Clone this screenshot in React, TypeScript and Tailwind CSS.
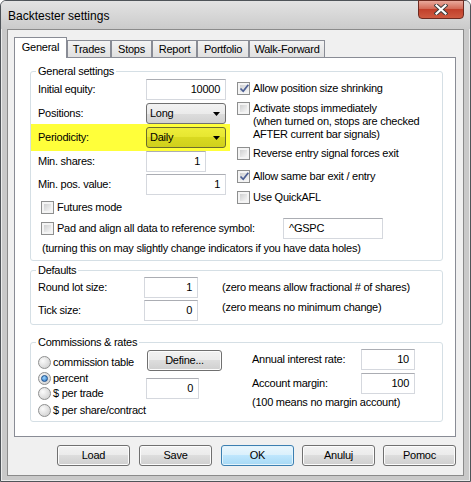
import React from 'react';

const Check = ({ on = false }: { on?: boolean }) => (
  <span className="w-[13px] h-[13px] shrink-0 border border-[#8e8f8f] bg-[#f4f4f4] p-[2px] flex">
    <span className="flex-1 bg-[linear-gradient(135deg,#cfd0d1,#f6f6f6)] flex items-center justify-center">
      {on && (
        <svg width="9" height="9" viewBox="0 0 9 9" className="overflow-visible">
          <path d="M0.5 4.5 L3.2 7.3 L8.3 0.8" fill="none" stroke="#4b5e93" strokeWidth="1.7" />
        </svg>
      )}
    </span>
  </span>
);

const Radio = ({ on = false }: { on?: boolean }) => (
  <span className="w-[13px] h-[13px] shrink-0 rounded-full border border-[#8e8f8f] bg-[radial-gradient(circle_at_35%_35%,#fbfbfb,#c9c9c9)] flex items-center justify-center">
    {on && <span className="w-[7px] h-[7px] rounded-full border border-[#1c4f8a] bg-[radial-gradient(circle_at_40%_35%,#9bd6ff,#2a6fc0)]" />}
  </span>
);

const Field = ({ v, className = '' }: { v: string; className?: string }) => (
  <div className={`h-[21px] shrink-0 border border-[#d5d8de] border-t-[#abadb3] bg-white flex items-center ${className}`}>
    {v}
  </div>
);

const Combo = ({ v, yellow = false }: { v: string; yellow?: boolean }) => (
  <div
    className={`w-[80px] h-[21px] shrink-0 rounded-[3px] border flex items-center justify-between pl-[3px] pr-[5px] ${
      yellow
        ? 'border-[#6b6b2e] bg-[linear-gradient(#eeee3a,#e6e630_50%,#d9d920_50%,#d0d01c)]'
        : 'border-[#707070] bg-[linear-gradient(#f2f2f2,#ebebeb_50%,#dddddd_50%,#d1d1d1)]'
    }`}
  >
    <span>{v}</span>
    <svg width="7" height="4" viewBox="0 0 7 4">
      <path d="M0 0 H7 L3.5 4 Z" fill="#000" />
    </svg>
  </div>
);

const Btn = ({ label, primary = false, className = '' }: { label: string; primary?: boolean; className?: string }) => (
  <div
    className={`h-[21px] shrink-0 rounded-[3px] border flex items-center justify-center ${
      primary
        ? 'border-[#3c7fb1] bg-[linear-gradient(#eaf6fd,#d9f0fc_50%,#bee6fd_50%,#a7d9f5)] shadow-[inset_0_0_0_1px_#e3f4fc]'
        : 'border-[#707070] bg-[linear-gradient(#f2f2f2,#ebebeb_50%,#dddddd_50%,#cfcfcf)] shadow-[inset_0_0_0_1px_#fcfcfc]'
    } ${className}`}
  >
    {label}
  </div>
);

const Group = ({ title, className, children }: { title: string; className: string; children: React.ReactNode }) => (
  <div className={`relative ml-[15px] w-[413px] rounded-[3px] border border-[#d5dfe5] ${className}`}>
    <span className="absolute -top-[7px] left-[5px] bg-white px-[2px] leading-[13px]">{title}</span>
    {children}
  </div>
);

const tabs = [
  { name: 'Trades', w: 'w-[44px]' },
  { name: 'Stops', w: 'w-[41px]' },
  { name: 'Report', w: 'w-[45px]' },
  { name: 'Portfolio', w: 'w-[52px]' },
  { name: 'Walk-Forward', w: 'w-[76px]' },
];

export default function App() {
  return (
    <div className="w-[471px] h-[482px] whitespace-nowrap font-['Liberation_Sans',Arial,sans-serif] text-[11px] leading-[13px] tracking-[-0.25px] text-black">
      <div className="w-full h-full rounded-t-[6px] border border-[#4f5459] bg-[#c9c9c9] shadow-[inset_0_0_0_1px_#ebebeb] flex flex-col">
        {/* title bar */}
        <div className="h-[28px] shrink-0 flex items-start justify-between rounded-t-[5px] bg-[linear-gradient(#e3e3e3,#cbcbcb)]">
          <span className="pl-[7px] pt-[8px] text-[12px] leading-[14px] tracking-normal">Backtester settings</span>
          <div className="mr-[6px] -mt-px w-[46px] h-[19px] rounded-b-[4px] border border-[#6d2a20] bg-[linear-gradient(#e9a99c,#d36b58_45%,#c2402b_50%,#cf5a40)] flex items-center justify-center">
            <svg width="14" height="11" viewBox="0 0 14 11">
              <path d="M2.5 1.5 L11.5 9.5 M11.5 1.5 L2.5 9.5" stroke="#3b3b3b" strokeWidth="4" strokeLinecap="square" />
              <path d="M2.5 1.5 L11.5 9.5 M11.5 1.5 L2.5 9.5" stroke="#ffffff" strokeWidth="2.2" strokeLinecap="square" />
            </svg>
          </div>
        </div>

        {/* client area */}
        <div className="mx-[6px] h-[447px] shrink-0 border border-[#8b8b8b] bg-[#f0f0f0] flex flex-col">
          {/* tabs */}
          <div className="mt-[7px] ml-[6px] h-[20px] flex items-end">
            <div className="relative z-10 -mb-px w-[53px] h-[21px] border border-b-0 border-[#898c95] bg-white flex items-start justify-center pt-[3px]">
              General
            </div>
            {tabs.map((t) => (
              <div
                key={t.name}
                className={`${t.w} h-[17px] border border-b-0 border-[#898c95] bg-[linear-gradient(#f3f3f3,#e0e0e0)] flex items-center justify-center`}
              >
                {t.name}
              </div>
            ))}
          </div>

          {/* panel */}
          <div className="ml-[6px] w-[442px] h-[380px] border border-[#898c95] bg-white flex flex-col">
            {/* General settings */}
            <Group title="General settings" className="mt-[13px] h-[190px]">
              <div className="h-[129px] flex">
                <div className="w-[199px] flex flex-col">
                  <div className="mt-[7px] pl-[7px] flex items-center">
                    <span className="w-[108px]">Initial equity:</span>
                    <Field v="10000" className="w-[80px] justify-end pr-[5px]" />
                  </div>
                  <div className="mt-[3px] pl-[7px] flex items-center">
                    <span className="w-[108px]">Positions:</span>
                    <Combo v="Long" />
                  </div>
                  <div className="h-[27px] pl-[7px] pt-[3px] bg-[#ffff3a] flex items-start">
                    <span className="w-[108px] pt-[4px]">Periodicity:</span>
                    <Combo v="Daily" yellow />
                  </div>
                  <div className="pl-[7px] flex items-center">
                    <span className="w-[108px]">Min. shares:</span>
                    <Field v="1" className="w-[60px] justify-end pr-[5px]" />
                  </div>
                  <div className="mt-[2px] pl-[7px] flex items-center">
                    <span className="w-[108px]">Min. pos. value:</span>
                    <Field v="1" className="w-[80px] justify-end pr-[5px]" />
                  </div>
                </div>
                <div className="ml-[7px] flex flex-col">
                  <div className="mt-[10px] flex items-start gap-[3px]">
                    <Check on />
                    <span>Allow position size shrinking</span>
                  </div>
                  <div className="mt-[7px] flex items-start gap-[3px]">
                    <Check />
                    <span>
                      Activate stops immediately
                      <br />
                      (when turned on, stops are checked
                      <br />
                      AFTER current bar signals)
                    </span>
                  </div>
                  <div className="mt-[6px] flex items-start gap-[3px]">
                    <Check />
                    <span>Reverse entry signal forces exit</span>
                  </div>
                  <div className="mt-[10px] flex items-start gap-[3px]">
                    <Check on />
                    <span>Allow same bar exit / entry</span>
                  </div>
                  <div className="mt-[8px] flex items-start gap-[3px]">
                    <Check />
                    <span>Use QuickAFL</span>
                  </div>
                </div>
              </div>
              <div className="pl-[10px] flex items-start gap-[3px]">
                <Check />
                <span>Futures mode</span>
              </div>
              <div className="mt-[4px] pl-[10px] flex items-center">
                <Check />
                <span className="ml-[3px] w-[226px]">Pad and align all data to reference symbol:</span>
                <Field v="^GSPC" className="w-[100px] pl-[5px]" />
              </div>
              <div className="mt-[3px] pl-[11px]">(turning this on may slightly change indicators if you have data holes)</div>
            </Group>

            {/* Defaults */}
            <Group title="Defaults" className="mt-[9px] h-[55px]">
              <div className="mt-[6px] pl-[7px] flex items-center">
                <span className="w-[106px]">Round lot size:</span>
                <Field v="1" className="w-[54px] justify-end pr-[5px]" />
                <span className="ml-[24px]">(zero means allow fractional # of shares)</span>
              </div>
              <div className="mt-[2px] pl-[7px] flex items-start">
                <span className="w-[106px] pt-[4px]">Tick size:</span>
                <Field v="0" className="w-[54px] justify-end pr-[5px]" />
                <span className="ml-[24px] pt-[1px]">(zero means no minimum change)</span>
              </div>
            </Group>

            {/* Commissions & rates */}
            <Group title="Commissions & rates" className="mt-[17px] h-[80px] flex">
              <div className="w-[115px] shrink-0 pl-[7px] flex flex-col">
                <div className="mt-[13px] flex items-start gap-[2px]">
                  <Radio />
                  <span>commission table</span>
                </div>
                <div className="mt-[3px] flex items-start gap-[2px]">
                  <Radio on />
                  <span>percent</span>
                </div>
                <div className="mt-[2px] flex items-start gap-[2px]">
                  <Radio />
                  <span>$ per trade</span>
                </div>
                <div className="mt-[4px] flex items-start gap-[2px]">
                  <Radio />
                  <span>$ per share/contract</span>
                </div>
              </div>
              <div className="flex flex-col">
                <Btn label="Define..." className="mt-[7px] ml-px w-[75px]" />
                <Field v="0" className="mt-[7px] w-[53px] justify-end pr-[5px]" />
              </div>
              <div className="ml-[30px] flex flex-col">
                <div className="mt-[6px] flex items-center">
                  <span className="w-[109px]">Annual interest rate:</span>
                  <Field v="10" className="w-[54px] justify-end pr-[5px]" />
                </div>
                <div className="mt-[3px] flex items-center">
                  <span className="w-[109px]">Account margin:</span>
                  <Field v="100" className="w-[54px] justify-end pr-[5px]" />
                </div>
                <div className="mt-[2px]">(100 means no margin account)</div>
              </div>
            </Group>
          </div>

          {/* buttons */}
          <div className="mt-[8px] pr-[7px] flex justify-end">
            <Btn label="Load" className="w-[73px] mr-[9px]" />
            <Btn label="Save" className="w-[73px] mr-[9px]" />
            <Btn label="OK" primary className="w-[73px] mr-[8px]" />
            <Btn label="Anuluj" className="w-[73px] mr-[8px]" />
            <Btn label="Pomoc" className="w-[73px]" />
          </div>
        </div>
      </div>
    </div>
  );
}
